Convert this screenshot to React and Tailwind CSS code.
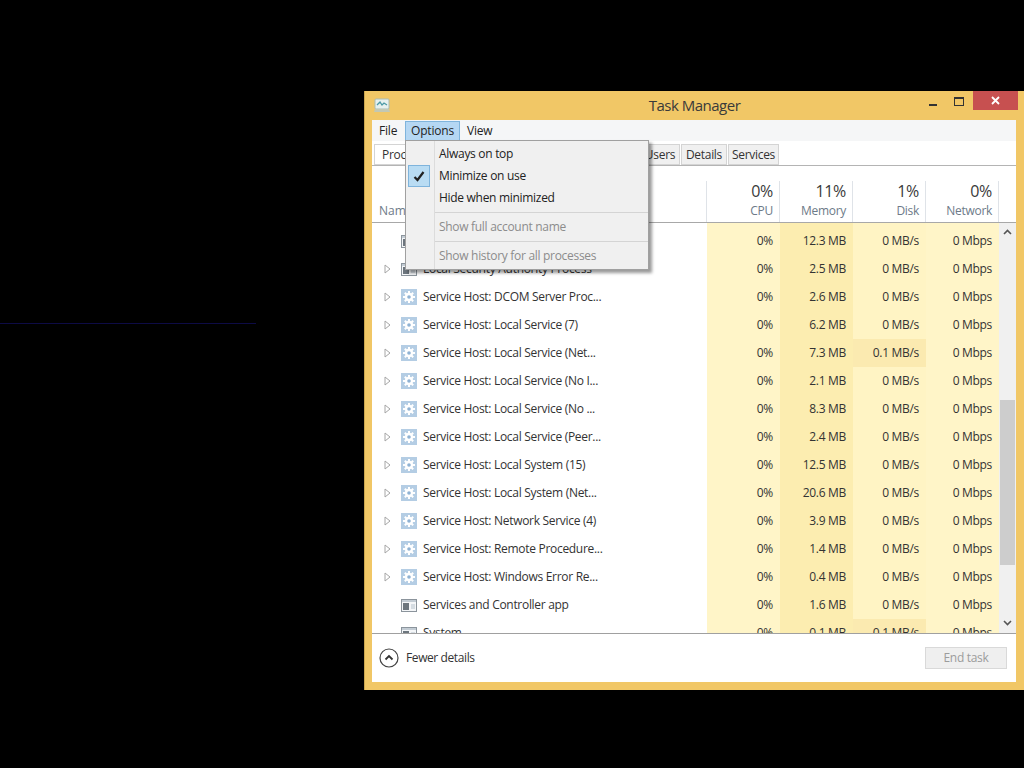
import React from "react";

const rows = [
  { name: "", icon: "app", mem: "12.3 MB", disk: "0 MB/s" },
  { name: "Local Security Authority Process", arrow: true, icon: "app", mem: "2.5 MB", disk: "0 MB/s" },
  { name: "Service Host: DCOM Server Proc...", arrow: true, mem: "2.6 MB", disk: "0 MB/s" },
  { name: "Service Host: Local Service (7)", arrow: true, mem: "6.2 MB", disk: "0 MB/s" },
  { name: "Service Host: Local Service (Net...", arrow: true, mem: "7.3 MB", disk: "0.1 MB/s", hot: true },
  { name: "Service Host: Local Service (No I...", arrow: true, mem: "2.1 MB", disk: "0 MB/s" },
  { name: "Service Host: Local Service (No ...", arrow: true, mem: "8.3 MB", disk: "0 MB/s" },
  { name: "Service Host: Local Service (Peer...", arrow: true, mem: "2.4 MB", disk: "0 MB/s" },
  { name: "Service Host: Local System (15)", arrow: true, mem: "12.5 MB", disk: "0 MB/s" },
  { name: "Service Host: Local System (Net...", arrow: true, mem: "20.6 MB", disk: "0 MB/s" },
  { name: "Service Host: Network Service (4)", arrow: true, mem: "3.9 MB", disk: "0 MB/s" },
  { name: "Service Host: Remote Procedure...", arrow: true, mem: "1.4 MB", disk: "0 MB/s" },
  { name: "Service Host: Windows Error Re...", arrow: true, mem: "0.4 MB", disk: "0 MB/s" },
  { name: "Services and Controller app", icon: "app", mem: "1.6 MB", disk: "0 MB/s" },
  { name: "System", icon: "app", mem: "0.1 MB", disk: "0.1 MB/s", hot: true },
];

function GearIcon() {
  return (
    <svg width="16" height="16" viewBox="0 0 16 16" className="shrink-0">
      <rect width="16" height="16" fill="#b4cde4" />
      <g stroke="#ffffff" strokeWidth="2">
        <path d="M8 2v12M2 8h12M3.8 3.8l8.4 8.4M12.2 3.8l-8.4 8.4" />
      </g>
      <circle cx="8" cy="8" r="4.2" fill="#ffffff" />
      <circle cx="8" cy="8" r="1.8" fill="#8fb2d3" />
    </svg>
  );
}

function AppIcon() {
  return (
    <svg width="16" height="13" viewBox="0 0 16 13" className="shrink-0">
      <rect x="0.5" y="0.5" width="15" height="12" fill="#f4f6f8" stroke="#8b949c" />
      <rect x="1" y="1" width="14" height="2" fill="#c3ccd4" />
      <rect x="2" y="4" width="6" height="7" fill="#6d767e" />
      <rect x="10" y="5" width="4" height="5" fill="#d5dce2" />
    </svg>
  );
}

function Expander() {
  return (
    <svg width="7" height="10" viewBox="0 0 7 10" className="shrink-0">
      <path d="M1 1l5 4-5 4z" fill="#ffffff" stroke="#a6a6a6" />
    </svg>
  );
}

function TitleIcon() {
  return (
    <svg width="18" height="16" viewBox="0 0 18 16">
      <rect x="2" y="1" width="14" height="10" rx="1" fill="#e6f0ee" stroke="#a9bcb4" />
      <path d="M4 7l3-3 2 3 2-2 3 2" fill="none" stroke="#4c9aa6" strokeWidth="1.3" />
      <path d="M2 11h14l1 3H1z" fill="#c2c8b4" />
    </svg>
  );
}

function Row({ row }) {
  return (
    <div className="flex h-[28px] shrink-0 items-center text-[12px] tracking-[-0.3px] text-[#333]">
      <div className="flex w-[335px] items-center">
        <div className="flex w-[29px] justify-end pr-[10px]">{row.arrow && <Expander />}</div>
        <div className="flex w-[22px] items-center">{row.icon === "app" ? <AppIcon /> : <GearIcon />}</div>
        <span>{row.name}</span>
      </div>
      <div className="flex h-full w-[73px] items-center justify-end bg-[#fff5c8] pr-[7px]">0%</div>
      <div className="flex h-full w-[73px] items-center justify-end bg-[#fcedb0] pr-[7px]">{row.mem}</div>
      <div className={`flex h-full w-[73px] items-center justify-end pr-[7px] ${row.hot ? "bg-[#fbeab0]" : "bg-[#fff4c4]"}`}>{row.disk}</div>
      <div className="flex h-full w-[73px] items-center justify-end bg-[#fff5c8] pr-[7px]">0 Mbps</div>
    </div>
  );
}

function HeaderCell({ pct, label }) {
  return (
    <div className="flex h-[41px] w-[73px] flex-col items-end justify-between border-l border-[#dfe3e8] pb-[3px] pr-[6px]">
      <span className="text-[16px] leading-[20px] tracking-[-0.3px] text-[#3a3a3a]">{pct}</span>
      <span className="text-[12px] leading-[16px] tracking-[-0.3px] text-[#6d7a88]">{label}</span>
    </div>
  );
}

function Tab({ label, width, active }) {
  return (
    <div
      className={`flex h-[21px] items-center justify-center border border-[#d4d4d4] pt-[1px] text-[12px] text-[#333] ${active ? "bg-white" : "bg-[#f0f0f0]"} ${width}`}
    >
      {label}
    </div>
  );
}

function MenuItem({ label, disabled, checked }) {
  return (
    <div className="flex h-[22px] items-center">
      <div className="flex w-[29px] justify-start pl-[2px]">
        {checked && (
          <div className="flex h-[22px] w-[22px] items-center justify-center border border-[#7fb4dc] bg-[#b9dcf3]">
            <svg width="12" height="11" viewBox="0 0 12 11">
              <path d="M1.5 6l3 3 6-8" fill="none" stroke="#222" strokeWidth="2.2" />
            </svg>
          </div>
        )}
      </div>
      <span className={`pl-[4px] ${disabled ? "text-[#8c8c8c]" : "text-[#222]"}`}>{label}</span>
    </div>
  );
}

function OptionsMenu() {
  return (
    <div className="absolute left-[405px] top-[140px] z-10 flex h-[130px] w-[244px] flex-col border border-[#a0a0a0] bg-[#f0f0f0] pt-[2px] text-[12px] tracking-[-0.3px] shadow-[3px_3px_3px_rgba(0,0,0,0.4)]">
      <div className="absolute bottom-0 left-[28px] top-0 w-px bg-[#dcdcdc]" />
      <MenuItem label="Always on top" />
      <MenuItem label="Minimize on use" checked />
      <MenuItem label="Hide when minimized" />
      <div className="my-[3px] ml-[29px] h-px bg-[#d4d4d4]" />
      <MenuItem label="Show full account name" disabled />
      <div className="my-[3px] ml-[29px] h-px bg-[#d4d4d4]" />
      <MenuItem label="Show history for all processes" disabled />
    </div>
  );
}

export default function App() {
  return (
    <div className="relative flex h-screen w-full overflow-hidden bg-black font-['Open_Sans',sans-serif]">
      <div className="w-[364px] shrink-0 pt-[323px]">
        <div className="h-px w-[256px] bg-[#0d0b45]" />
      </div>

      <div className="mt-[91px] flex h-[599px] w-[660px] flex-col border-l border-[#c9a650] bg-[#f1c766] px-[7px] pb-[8px]">
        <div className="flex h-[29px] shrink-0 items-start">
          <div className="mt-[7px] w-[110px] pl-[1px]"><TitleIcon /></div>
          <div className="flex-1 pt-[3px] text-center text-[15px] leading-[22px] tracking-[-0.5px] text-[#3a3a3a]">Task Manager</div>
          <div className="flex w-[110px] items-start justify-end">
            <div className="mr-[17px] mt-[13px] h-[2px] w-[8px] bg-[#333]" />
            <div className="mr-[9px] mt-[6px] h-[9px] w-[10px] border border-t-2 border-[#333]" />
            <div className="mr-[-1px] flex h-[19px] w-[45px] items-center justify-center bg-[#c75050] text-white">
              <svg width="9" height="9" viewBox="0 0 9 9">
                <path d="M1 1l7 7M8 1L1 8" stroke="#ffffff" strokeWidth="1.8" />
              </svg>
            </div>
          </div>
        </div>

        <div className="flex h-[562px] w-[644px] flex-col bg-white">
          <div className="flex h-[21px] shrink-0 items-center bg-[#f5f6f7] text-[12px] tracking-[-0.2px] text-[#222]">
            <span className="ml-[7px] w-[26px]">File</span>
            <span className="flex h-[20px] w-[55px] items-center justify-center border border-[#7fb4dc] bg-[#b5d7f3]">Options</span>
            <span className="ml-[7px]">View</span>
          </div>

          <div className="flex h-[25px] shrink-0 items-end border-b border-[#b4b4b4] pl-[2px] tracking-[-0.3px]">
            <Tab label="Processes" width="w-[69px]" active />
            <Tab label="Performance" width="w-[80px]" />
            <Tab label="App history" width="w-[66px]" />
            <Tab label="Startup" width="w-[50px]" />
            <Tab label="Users" width="w-[40px] ml-px" />
            <Tab label="Details" width="w-[46px] ml-px" />
            <Tab label="Services" width="w-[51px] ml-px" />
          </div>

          <div className="flex h-[57px] shrink-0 items-end border-b border-[#a8a8a8]">
            <div className="w-[334px] pb-[3px] pl-[7px] text-[12px] leading-[16px] text-[#6d7a88]">Name</div>
            <div className="flex">
              <HeaderCell pct="0%" label="CPU" />
              <HeaderCell pct="11%" label="Memory" />
              <HeaderCell pct="1%" label="Disk" />
              <HeaderCell pct="0%" label="Network" />
            </div>
            <div className="h-[41px] w-[18px] border-l border-[#dfe3e8]" />
          </div>

          <div className="flex h-[410px] shrink-0 overflow-hidden">
            <div className="flex w-[627px] shrink-0 flex-col bg-white">
              <div className="flex h-[4px] shrink-0">
                <div className="w-[335px]" />
                <div className="w-[73px] bg-[#fff5c8]" />
                <div className="w-[73px] bg-[#fcedb0]" />
                <div className="w-[73px] bg-[#fff4c4]" />
                <div className="w-[73px] bg-[#fff5c8]" />
              </div>
              {rows.map((row, i) => (
                <Row key={i} row={row} />
              ))}
            </div>
            <div className="flex w-[17px] flex-col items-center bg-[#f0f0f0]">
              <svg width="9" height="6" viewBox="0 0 9 6" className="mt-[6px]">
                <path d="M1 5l3.5-3.5L8 5" fill="none" stroke="#555" strokeWidth="1.6" />
              </svg>
              <div className="mt-[165px] h-[165px] w-[15px] shrink-0 bg-[#cdcdcd]" />
              <svg width="9" height="6" viewBox="0 0 9 6" className="mt-[55px]">
                <path d="M1 1l3.5 3.5L8 1" fill="none" stroke="#555" strokeWidth="1.6" />
              </svg>
            </div>
          </div>

          <div className="flex h-[49px] shrink-0 items-center justify-between border-t border-[#a0a0a0] pl-[7px] pr-[9px]">
            <div className="flex items-center text-[12px] tracking-[-0.4px] text-[#333]">
              <svg width="20" height="20" viewBox="0 0 20 20">
                <circle cx="10" cy="10" r="9" fill="none" stroke="#444" strokeWidth="1.2" />
                <path d="M6.5 11.5L10 8l3.5 3.5" fill="none" stroke="#333" strokeWidth="1.8" />
              </svg>
              <span className="ml-[7px]">Fewer details</span>
            </div>
            <div className="flex h-[22px] w-[82px] items-center justify-center border border-[#d9d9d9] bg-[#efefef] text-[12px] tracking-[-0.3px] text-[#9c9c9c]">End task</div>
          </div>
        </div>
      </div>

      <OptionsMenu />
    </div>
  );
}
